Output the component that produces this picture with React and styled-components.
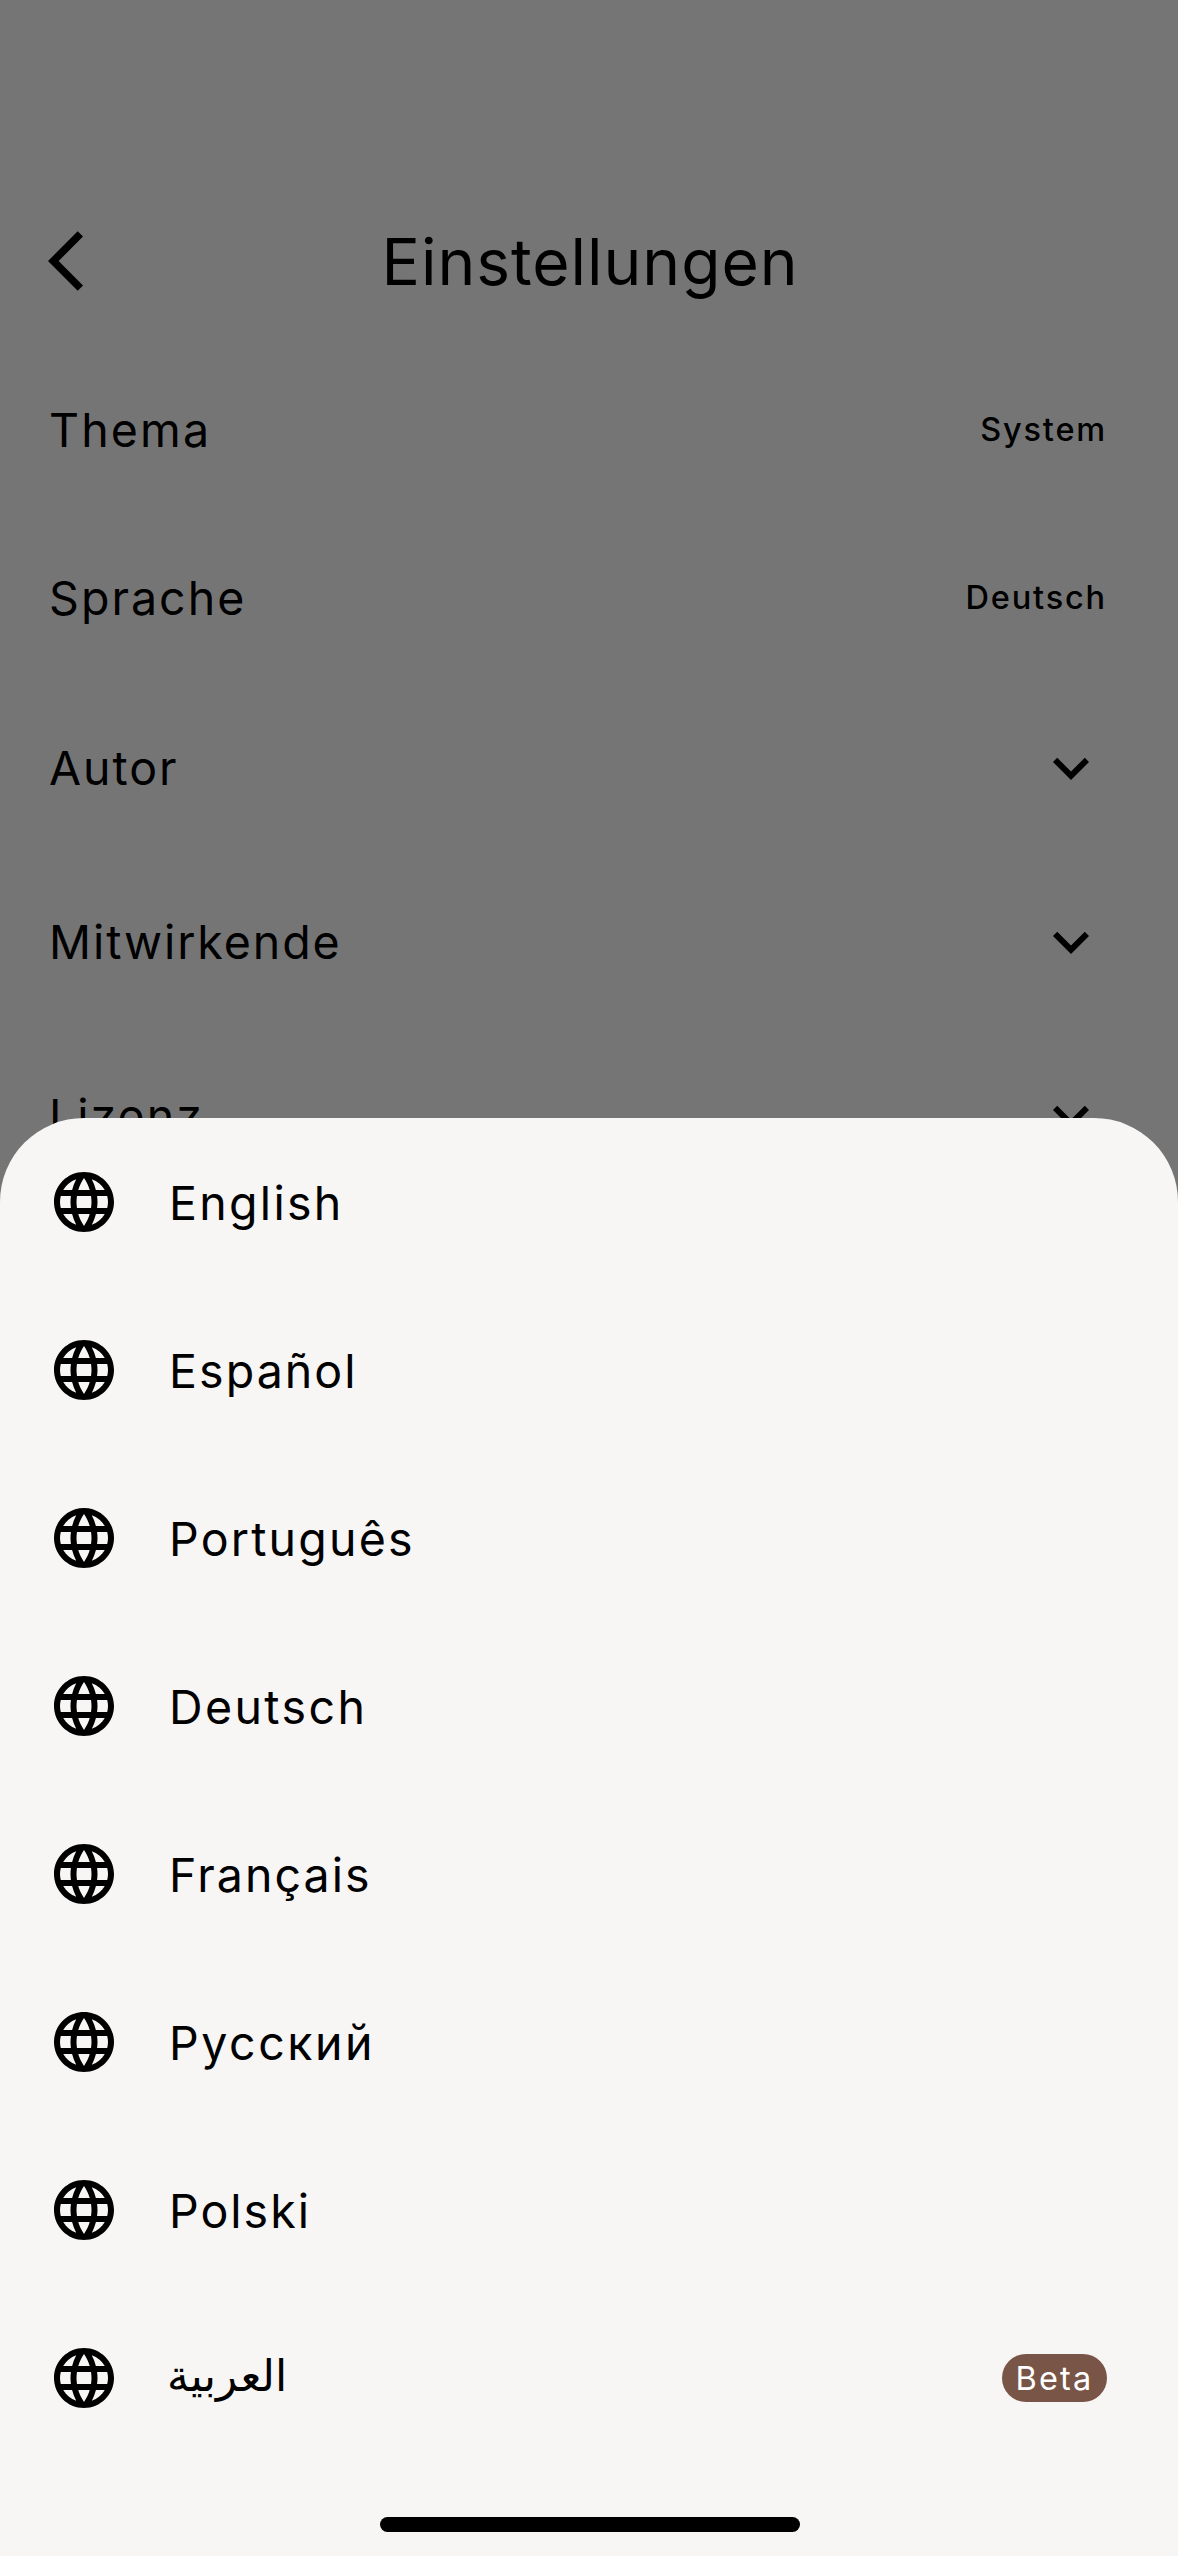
import React from "react";
import styled, { createGlobalStyle } from "styled-components";

const GlobalStyle = createGlobalStyle`
  body {
    margin: 0;
    background: #fff;
  }
  * {
    box-sizing: border-box;
  }
`;

const Screen = styled.div`
  position: relative;
  width: 1178px;
  height: 2556px;
  overflow: hidden;
  background: #fff;
  color: #000;
  font-family: Inter, "Noto Sans", sans-serif;
`;

const AppBar = styled.header`
  display: grid;
  grid-template-columns: 168px 1fr 168px;
  align-items: center;
  height: 345px;
  padding-top: 177px;
`;

const BackButton = styled.button`
  display: flex;
  padding: 0 0 0 48px;
  border: 0;
  background: none;
  color: inherit;
`;

const Title = styled.h1`
  margin: 0;
  padding: 2px 0 0 2px;
  text-align: center;
  font-size: 64px;
  font-weight: 400;
  line-height: 84px;
  letter-spacing: 0.98px;
`;

const SettingRow = styled.div`
  display: flex;
  align-items: center;
  justify-content: space-between;
  height: ${(p) => (p.$expandable ? 174 : 168)}px;
  padding: ${(p) => (p.$expandable ? 0 : 2)}px 71px 0 49px;
`;

const Label = styled.span`
  font-size: 46.5px;
  line-height: 72px;
  letter-spacing: ${(p) => p.$spacing}px;
`;

const Value = styled.span`
  font-size: 32.5px;
  font-weight: 500;
  line-height: 48px;
  letter-spacing: 1.82px;
`;

const Icon = styled.svg`
  display: block;
  flex: none;
  width: 72px;
  height: 72px;
  fill: currentColor;
`;

const Scrim = styled.div`
  position: absolute;
  inset: 0;
  display: flex;
  flex-direction: column;
  justify-content: flex-end;
  background: rgba(0, 0, 0, 0.54);
`;

const Sheet = styled.section`
  display: flex;
  flex-direction: column;
  height: 1438px;
  border-radius: 84px 84px 0 0;
  background: #f7f6f5;
`;

const LanguageRow = styled.div`
  display: flex;
  align-items: center;
  gap: 49px;
  height: 168px;
  padding: 0 71px 0 48px;

  ${Label} {
    padding-top: 2px;
  }
`;

const ArabicLabel = styled.span`
  font-family: "DejaVu Sans", sans-serif;
  font-size: 44px;
  line-height: 72px;
  padding-bottom: 4px;
  margin-left: -2px;
`;

const Badge = styled.span`
  display: flex;
  align-items: center;
  justify-content: center;
  width: 105px;
  height: 48px;
  margin-left: auto;
  padding-top: 2px;
  border-radius: 24px;
  background: #795548;
  color: #fff;
  font-size: 32.5px;
  line-height: 48px;
  letter-spacing: 2.17px;
`;

const HomeIndicator = styled.div`
  width: 420px;
  height: 15px;
  margin: auto auto 24px 380px;
  border-radius: 8px;
  background: #000;
`;

const BackIcon = () => (
  <Icon viewBox="0 0 24 24">
    <path d="M11.67 3.87L9.9 2.1 0 12l9.9 9.9 1.77-1.77L3.54 12z" />
  </Icon>
);

const ExpandIcon = () => (
  <Icon viewBox="0 0 24 24">
    <path d="M16.59 8.59L12 13.17 7.41 8.59 6 10l6 6 6-6z" />
  </Icon>
);

const LanguageIcon = () => (
  <Icon viewBox="0 0 24 24">
    <path d="M11.99 2C6.47 2 2 6.48 2 12s4.47 10 9.99 10C17.52 22 22 17.52 22 12S17.52 2 11.99 2zm6.93 6h-2.95c-.32-1.25-.78-2.45-1.38-3.56 1.84.63 3.37 1.91 4.33 3.56zM12 4.04c.83 1.2 1.48 2.53 1.91 3.96h-3.82c.43-1.43 1.08-2.76 1.91-3.96zM4.26 14C4.1 13.36 4 12.69 4 12s.1-1.36.26-2h3.38c-.08.66-.14 1.32-.14 2s.06 1.34.14 2H4.26zm.82 2h2.95c.32 1.25.78 2.45 1.38 3.56-1.84-.63-3.37-1.9-4.33-3.56zm2.95-8H5.08c.96-1.66 2.49-2.93 4.33-3.56C8.81 5.55 8.35 6.75 8.03 8zM12 19.96c-.83-1.2-1.48-2.53-1.91-3.96h3.82c-.43 1.43-1.08 2.76-1.91 3.96zM14.34 14H9.66c-.09-.66-.16-1.32-.16-2s.07-1.35.16-2h4.68c.09.65.16 1.32.16 2s-.07 1.34-.16 2zm.25 5.56c.6-1.11 1.06-2.31 1.38-3.56h2.95c-.96 1.65-2.49 2.93-4.33 3.56zM16.36 14c.08-.66.14-1.32.14-2s-.06-1.34-.14-2h3.38c.16.64.26 1.31.26 2s-.1 1.36-.26 2h-3.38z" />
  </Icon>
);

const settings = [
  { label: "Thema", value: "System", spacing: 2.16 },
  { label: "Sprache", value: "Deutsch", spacing: 2.05 },
  { label: "Autor", spacing: 1.95 },
  { label: "Mitwirkende", spacing: 1.93 },
  { label: "Lizenz", spacing: 2.01 },
];

const languages = [
  { name: "English", spacing: 2.3 },
  { name: "Español", spacing: 2.07 },
  { name: "Português", spacing: 2.2 },
  { name: "Deutsch", spacing: 2.4 },
  { name: "Français", spacing: 2.06 },
  { name: "Русский", spacing: 2.55 },
  { name: "Polski", spacing: 2.01 },
];

export default function App() {
  return (
    <>
      <GlobalStyle />
      <Screen>
        <AppBar>
          <BackButton aria-label="Zurück">
            <BackIcon />
          </BackButton>
          <Title>Einstellungen</Title>
        </AppBar>
        {settings.map(({ label, value, spacing }) => (
          <SettingRow key={label} $expandable={!value}>
            <Label $spacing={spacing}>{label}</Label>
            {value ? <Value>{value}</Value> : <ExpandIcon />}
          </SettingRow>
        ))}
        <Scrim>
          <Sheet>
            {languages.map(({ name, spacing }) => (
              <LanguageRow key={name}>
                <LanguageIcon />
                <Label $spacing={spacing}>{name}</Label>
              </LanguageRow>
            ))}
            <LanguageRow>
              <LanguageIcon />
              <ArabicLabel lang="ar" dir="rtl">العربية</ArabicLabel>
              <Badge>Beta</Badge>
            </LanguageRow>
            <HomeIndicator />
          </Sheet>
        </Scrim>
      </Screen>
    </>
  );
}
